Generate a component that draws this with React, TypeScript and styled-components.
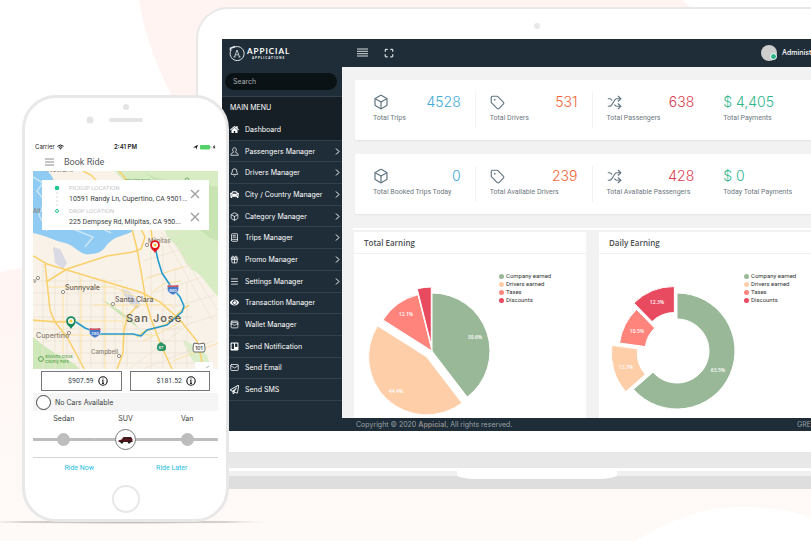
import React, { useState } from 'react'
import styled, { createGlobalStyle } from 'styled-components';
import { Bell, BookText, Box, Gift, Mail, Maximize, Menu, Shuffle, Tag, WalletCards } from 'lucide-react';
import { FaCar, FaEye, FaHome, FaRegPaperPlane, FaTrello } from 'react-icons/fa';

const colors = {
  navy: '#1f2d38',
  navyDark: '#161f26',
  rule: '#33414c',
  bezel: '#e8e8e8',
  page: '#f2f2f2',
  blue: '#41a9d8',
  orange: '#ee6539',
  red: '#dc3b50',
  green: '#2fb58c',
  sage: '#99b898',
  peach: '#fecea8',
  coral: '#ff847c',
  rose: '#e84a5f',
}

const GlobalStyle = createGlobalStyle`
  * {
    box-sizing: border-box;
  }
  body {
    margin: 0;
    background: #fff;
    font-family: Roboto, sans-serif;
  }
  ul, h1, h2, p, fieldset {
    margin: 0;
    padding: 0;
    border: 0;
    list-style: none;
  }
  button, input {
    font-family: inherit;
    margin: 0;
    padding: 0;
    border: 0;
    background: none;
    min-width: 0;
  }
`

const Stage = styled.div`
  position: relative;
  min-height: 100vh;
  overflow: hidden;
`

const Backdrop = styled.svg`
  position: absolute;
  top: 0;
  left: 0;
`

/** Laptop */
const Laptop = styled.div`
  position: relative;
  margin: 7px -66px 0 196px;
`

const Lid = styled.div`
  border: 2px solid ${colors.bezel};
  border-bottom: 0;
  border-radius: 32px 32px 0 0;
  background: #fff;
  padding: 0 24px 21px;
`

const LidTop = styled.div`
  height: 30px;
  display: flex;
  justify-content: center;
  padding-top: 14px;
`

const Lens = styled.div`
  width: 6px;
  height: 6px;
  border-radius: 50%;
  background: ${colors.bezel};
`

const Screen = styled.div`
  display: grid;
  grid-template-columns: 120px 1fr;
  background: ${colors.navy};
`

const Hinge = styled.div`
  height: 16px;
  background: ${colors.bezel};
`

const Base = styled.div`
  position: relative;
  height: 21px;
  background: #dedede;
  border-top: 3px solid #fff;
  box-shadow: inset 0 5px 0 #f0f0f0;
`

const Notch = styled.div`
  position: absolute;
  top: 0;
  left: 50%;
  width: 160px;
  height: 8px;
  margin-left: -80px;
  background: #fff;
  border-radius: 0 0 20px 20px / 0 0 4px 4px;
`

/** Sidebar */
const Sidebar = styled.aside`
  font-family: Inter, sans-serif;
  font-size: 7px;
  color: #fff;
`

const Brand = styled.div`
  height: 29px;
  display: flex;
  align-items: center;
  gap: 2px;
  padding-left: 7px;
`

const BrandName = styled.p`
  font: 700 8px/9px Lato, sans-serif;
  letter-spacing: 1px;
`

const BrandSub = styled.p`
  font: 700 3px/4px Lato, sans-serif;
  letter-spacing: 1px;
  text-align: center;
`

const SearchRow = styled.div`
  padding: 5px 5px 6px 3px;
  border-bottom: 1px solid ${colors.rule};
`

const SearchInput = styled.input`
  display: block;
  width: 100%;
  height: 17px;
  border-radius: 9px;
  padding: 0 8px;
  background: #0a1216;
  font-size: 7px;
  color: #fff;
  &::placeholder {
    color: #a9adaf;
    opacity: 1;
  }
`

const MenuTitle = styled.h2`
  font-size: 7px;
  font-weight: 400;
  line-height: 22px;
  padding-left: 8px;
  background: ${colors.navyDark};
`

const MenuList = styled.ul`
  height: 282px;
  display: grid;
  grid-template-rows: repeat(13, 1fr);
`

const MenuItem = styled.li<
  {active: boolean}>`
  background: ${({active}) => active ? colors.navyDark : 'transparent'};
  border-bottom: 1px solid ${colors.rule};
`

const MenuLink = styled.a`
  height: 100%;
  display: grid;
  grid-template-columns: 9px 1fr 9px;
  align-items: center;
  column-gap: 6px;
  padding-left: 8px;
  color: #fff;
  text-decoration: none;
  white-space: nowrap;
  svg {
    width: 9px;
    height: 9px;
  }
`

/** Right side of the admin panel */
const Panel = styled.div`
  min-width: 0;
  display: flex;
  flex-direction: column;
`

const TopBar = styled.header`
  height: 28px;
  display: flex;
  align-items: center;
  gap: 16px;
  padding: 0 20px 1px 15px;
`

const IconButton = styled.button`
  display: flex;
  color: #d5dadd;
  cursor: pointer;
`

const User = styled.div`
  margin-left: auto;
  width: 70px;
  display: flex;
  align-items: center;
  gap: 5px;
  font: 500 7px/9px Inter, sans-serif;
  color: #fff;
`

const Avatar = styled.div`
  position: relative;
  flex: none;
  width: 16px;
  height: 16px;
  border-radius: 50%;
  background: #cdcdcd;
  &::after {
    content: '';
    position: absolute;
    right: 0;
    bottom: 1px;
    width: 5px;
    height: 5px;
    border-radius: 50%;
    border: 1px solid #fff;
    background: ${colors.green};
  }
`

const Content = styled.main`
  flex: 1;
  background: ${colors.page};
  padding: 13px 20px 0 12px;
`

const StatCard = styled.section`
  display: grid;
  grid-template-columns: repeat(4, 1fr);
  margin: 0 0 14px 1px;
  padding: 12px 6px 12px 3px;
  background: #fff;
  box-shadow: 0 1px 1px #e6e6e6;
`

const Stat = styled.div`
  height: 36px;
  padding: 0 14px;
  border-left: 1px solid #f3f3f3;
  &:first-child, &:last-child {
    border-left-color: #fff;
  }
`

const StatTop = styled.div`
  display: flex;
  align-items: center;
  justify-content: space-between;
  height: 20px;
  color: #607580;
`

const StatValue = styled.span<
  {color: string}>`
  font: 300 14px/20px Inter, sans-serif;
  color: ${({color}) => color};
`

const StatLabel = styled.p`
  font-size: 7px;
  line-height: 12px;
  color: #6d7880;
  white-space: nowrap;
`

const ChartRow = styled.div`
  display: grid;
  grid-template-columns: 1fr 1fr;
  gap: 13px;
  border-top: 2px solid #fff;
  padding-top: 2px;
  margin-left: -1px;
  padding-left: 1px;
`

const ChartCard = styled.section`
  background: #fff;
`

const ChartTitle = styled.h2`
  font: 600 8px/21px 'Open Sans', sans-serif;
  color: #4c4f52;
  padding-left: 10px;
  border-bottom: 1px solid #f0f0f0;
`

const ChartBody = styled.div`
  display: grid;
  grid-template-columns: 145px 1fr;
  height: 164px;
`

const Legend = styled.ul`
  padding-top: 18px;
`

const LegendItem = styled.li<
  {color: string}>`
  display: flex;
  align-items: center;
  gap: 2px;
  font-size: 6px;
  line-height: 8px;
  color: #333;
  &::before {
    content: '';
    width: 5px;
    height: 5px;
    border-radius: 50%;
    background: ${({color}) => color};
  }
`

const SliceLabel = styled.text`
  font: 600 5px 'Open Sans', sans-serif;
  fill: #fff;
  text-anchor: middle;
`

const Footer = styled.footer`
  display: flex;
  justify-content: space-between;
  padding: 2px 40px 1px 14px;
  background: ${colors.navy};
  font: 7px/10px Inter, sans-serif;
  color: #98a1a7;
  b {
    color: #858585;
  }
`

/** Phone */
const Phone = styled.div`
  position: absolute;
  top: 95px;
  left: 22px;
  width: 207px;
  border: 3px solid ${colors.bezel};
  border-radius: 34px;
  background: #fff;
  padding: 0 8px;
  font-size: 7px;
  color: #3b3f42;
`

const Earpiece = styled.svg`
  display: block;
  margin: 0 auto;
`

const StatusBar = styled.div`
  display: grid;
  grid-template-columns: 1fr auto 1fr;
  align-items: center;
  height: 12px;
  padding: 0 2px;
  font: 400 6px/8px Inter, sans-serif;
  color: #222;
  b {
    font-weight: 600;
  }
`

const StatusSide = styled.span<
  {end?: boolean}>`
  display: flex;
  align-items: center;
  gap: 2px;
  justify-content: ${({end}) => end ? 'flex-end' : 'flex-start'};
`

const NavBar = styled.div`
  height: 18px;
  display: flex;
  align-items: center;
  gap: 10px;
  padding: 0 12px;
  h1 {
    font-size: 9px;
    font-weight: 400;
    line-height: 12px;
    color: #55585b;
  }
`

const MapArea = styled.div`
  position: relative;
  > svg {
    display: block;
    width: 100%;
  }
`

const AddressCard = styled.div`
  position: absolute;
  top: 9px;
  left: 9px;
  right: 9px;
  display: grid;
  grid-template-columns: 11px 1fr;
  gap: 7px;
  padding: 2px 9px 2px 9px;
  background: #fff;
`

const Stop = styled.div`
  display: grid;
  grid-template-columns: 1fr 10px;
  align-items: center;
  column-gap: 3px;
  height: 23px;
`

const StopLabel = styled.label`
  display: block;
  font-size: 6px;
  line-height: 10px;
  color: #c6c8ca;
`

const StopInput = styled.input`
  display: block;
  width: 100%;
  height: 12px;
  font-size: 7px;
  color: #3b3f42;
`

const Fares = styled.div`
  display: grid;
  grid-template-columns: 1fr 1fr;
  gap: 8px;
  padding: 2px 8px;
`

const Fare = styled.button`
  height: 20px;
  display: flex;
  align-items: center;
  justify-content: flex-end;
  gap: 4px;
  padding-right: 13px;
  border: 1px solid #777;
  font-size: 7px;
  color: #34424c;
`

const Notice = styled.label`
  height: 18px;
  display: flex;
  align-items: center;
  gap: 4px;
  padding-left: 3px;
  background: #f5f5f5;
  font-family: Inter, sans-serif;
  input {
    appearance: none;
    width: 15px;
    height: 15px;
    border: 1px solid #444;
    border-radius: 50%;
    background: #fff;
  }
`

const RideTypes = styled.fieldset`
  display: grid;
  grid-template-columns: repeat(3, 1fr);
  height: 47px;
  padding-top: 3px;
  border-bottom: 1px solid #d4d4d4;
`

const RideType = styled.label`
  display: flex;
  flex-direction: column;
  align-items: center;
  font-family: Inter, sans-serif;
  line-height: 10px;
`

const RideTrack = styled.span`
  position: relative;
  width: 100%;
  height: 31px;
  display: grid;
  place-items: center;
  background: linear-gradient(#bdbdbd, #bdbdbd) center / 100% 3px no-repeat;
  input {
    appearance: none;
    grid-area: 1 / 1;
    width: 13px;
    height: 13px;
    border-radius: 50%;
    background: #bdbdbd;
  }
  input:checked {
    width: 21px;
    height: 21px;
    border: 1px solid #777;
    background: #fff;
  }
  svg {
    grid-area: 1 / 1;
    z-index: 1;
  }
`

const RideActions = styled.div`
  display: grid;
  grid-template-columns: 1fr 1fr;
  height: 20px;
  button {
    font-size: 7px;
    color: #1fbddb;
    cursor: pointer;
  }
`

const HomeButton = styled.button`
  display: block;
  width: 28px;
  height: 28px;
  margin: 7px auto 6px;
  border: 2px solid ${colors.bezel};
  border-radius: 50%;
`

type Slice = {
  value: number;
  color: string;
  offset: number;
  label?: string;
  at?: [number, number];
}

const legend = [
  { name: 'Company earned', color: colors.sage },
  { name: 'Drivers earned', color: colors.peach },
  { name: 'Taxes', color: colors.coral },
  { name: 'Discounts', color: colors.rose },
]

const totalSlices: Slice[] = [
  { value: 39.6, color: colors.sage, offset: 0, label: '39.6%', at: [121, 85] },
  { value: 44.4, color: colors.peach, offset: 8, label: '44.4%', at: [42, 139] },
  { value: 12.1, color: colors.coral, offset: 0, label: '12.1%', at: [52, 62] },
  { value: 3.9, color: colors.rose, offset: 6 },
]

const dailySlices: Slice[] = [
  { value: 63.5, color: colors.sage, offset: 0, label: '63.5%', at: [119, 118] },
  { value: 13.7, color: colors.peach, offset: 8, label: '13.7%', at: [27, 115] },
  { value: 10.5, color: colors.coral, offset: 0, label: '10.5%', at: [38, 79] },
  { value: 12.3, color: colors.rose, offset: 7, label: '12.3%', at: [58, 50] },
]

const menu = [
  { title: 'Dashboard', icon: <FaHome /> },
  { title: 'Passengers Manager', icon: <PersonIcon />, sub: true },
  { title: 'Drivers Manager', icon: <Bell />, sub: true },
  { title: 'City / Country Manager', icon: <FaCar />, sub: true },
  { title: 'Category Manager', icon: <Box />, sub: true },
  { title: 'Trips Manager', icon: <BookText />, sub: true },
  { title: 'Promo Manager', icon: <Gift />, sub: true },
  { title: 'Settings Manager', icon: <Menu />, sub: true },
  { title: 'Transaction Manager', icon: <FaEye /> },
  { title: 'Wallet Manager', icon: <WalletCards /> },
  { title: 'Send Notification', icon: <FaTrello /> },
  { title: 'Send Email', icon: <Mail /> },
  { title: 'Send SMS', icon: <FaRegPaperPlane /> },
]

const box = <Box size={16} strokeWidth={1.8} />
const tag = <Tag size={15} strokeWidth={1.8} />
const shuffle = <Shuffle size={15} strokeWidth={1.8} />

const stats = [
  [
    { label: 'Total Trips', value: '4528', color: colors.blue, icon: box },
    { label: 'Total Drivers', value: '531', color: colors.orange, icon: tag },
    { label: 'Total Passengers', value: '638', color: colors.red, icon: shuffle },
    { label: 'Total Payments', value: '$ 4,405', color: colors.green },
  ],
  [
    { label: 'Total Booked Trips Today', value: '0', color: colors.blue, icon: box },
    { label: 'Total Available Drivers', value: '239', color: colors.orange, icon: tag },
    { label: 'Total Available Passengers', value: '428', color: colors.red, icon: shuffle },
    { label: 'Today Total Payments', value: '$ 0', color: colors.green },
  ],
]

const stops = [
  { id: 'pickup', label: 'PICKUP LOCATION', value: '10591 Randy Ln, Cupertino, CA 9501...' },
  { id: 'drop', label: 'DROP LOCATION', value: '225 Dempsey Rd, Milpitas, CA 950...' },
]

/** Icons */
function PersonIcon () {
  return (
    <svg viewBox="0 0 24 24" fill="none" stroke="currentColor" strokeWidth="2">
      <path d="M12 2c-3.400 0-5 2.300-5 5.500 0 2.700 1.200 4.500 2.600 5.500-.3 2-1.600 2.500-4 3.200C3.300 16.900 2 18.300 2 22h20c0-3.700-1.300-5.100-3.600-5.800-2.400-.7-3.700-1.200-4-3.200 1.400-1 2.600-2.800 2.600-5.500C17 4.300 15.400 2 12 2z" />
    </svg>
  )
}

function ChevronIcon () {
  return (
    <svg viewBox="0 0 9 9" fill="none" stroke="currentColor" strokeWidth="1">
      <path d="M3 1.500 6 4.500 3 7.500" />
    </svg>
  )
}

function CrossIcon () {
  return (
    <svg width="10" height="10" viewBox="0 0 10 10" stroke="#a0a0a0" strokeWidth="1.400">
      <path d="M1 1 9 9M9 1 1 9" />
    </svg>
  )
}

function InfoIcon () {
  return (
    <svg width="10" height="10" viewBox="0 0 10 10" fill="none" stroke="#111">
      <circle cx="5" cy="5" r="4.200" strokeWidth="1.100" />
      <path d="M5 4.300V7.500M5 2.400V3.500M4.200 4.500H5M4 7.400H6" strokeWidth="1" />
    </svg>
  )
}

function BrandIcon () {
  return (
    <svg width="16" height="17" viewBox="0 0 16 17" fill="none" stroke="#e3e8ea">
      <path d="M5 2.300A7 7 0 1 1 2.100 5" strokeWidth="1" />
      <path d="M1 3.500 6 1.500M1.500 5.500V2.500" strokeWidth="1.600" />
      <path d="M5.500 12 8 5 10.500 12M6.500 9.800H9.500M4.500 12H6.500M9.500 12H11.500" strokeWidth=".8" />
    </svg>
  )
}

function polar (cx: number, cy: number, r: number, deg: number) {
  const rad = deg * Math.PI / 180;
  return [cx + r * Math.sin(rad), cy - r * Math.cos(rad)];
}

function slicePath (start: number, end: number, inner: number, offset: number) {
  const outer = 58;
  const [cx, cy] = polar(78, 97, offset, (start + end) / 2);
  const [x1, y1] = polar(cx, cy, outer, start);
  const [x2, y2] = polar(cx, cy, outer, end);
  const [x3, y3] = polar(cx, cy, inner, end);
  const [x4, y4] = polar(cx, cy, inner, start);
  const large = end - start > 180 ? 1 : 0;
  return `M${x1} ${y1}A${outer} ${outer} 0 ${large} 1 ${x2} ${y2}L${x3} ${y3}A${inner} ${inner} 0 ${large} 0 ${x4} ${y4}Z`;
}

const Pie = ({title, slices, inner = 0}: {title: string; slices: Slice[]; inner?: number}) => {
  let angle = 0;

  /** Renders */
  const _renderSlice = (slice: Slice, index: number) => {
    const start = angle;
    angle += slice.value * 3.6;
    return (
      <path
        key={`slice_${index}`}
        d={slicePath(start, angle, inner, slice.offset)}
        fill={slice.color}
        stroke="#fff"
        strokeWidth="1"
      />
    )
  }

  return (
    <ChartCard>
      <ChartTitle>{title}</ChartTitle>
      <ChartBody>
        <svg width="145" height="164" viewBox="0 0 145 164">
          {slices.map(_renderSlice)}
          {slices.filter(s => s.at).map(s => (
            <SliceLabel key={s.label} x={s.at![0]} y={s.at![1]}>{s.label}</SliceLabel>
          ))}
        </svg>
        <Legend>
          {legend.map(l => <LegendItem key={l.name} color={l.color}>{l.name}</LegendItem>)}
        </Legend>
      </ChartBody>
    </ChartCard>
  )
}

const CityMap = () => (
  <svg viewBox="0 0 185 198" fontFamily="Inter, sans-serif" fontWeight="500" fill="none">
    <rect width="185" height="198" fill="#f9f2e8" />
    {/* parks and hills */}
    <path d="M82 0H185V125C176 118 172 106 160 99C148 92 150 78 138 70C128 62 130 30 112 22C98 16 90 10 82 0z" fill="#d8ecc4" />
    <path d="M110 0C125 12 150 8 185 16V70C160 62 150 30 110 0z" fill="#c8e4b3" />
    <path d="M0 166C8 172 14 178 24 183C34 188 42 192 46 198H0z" fill="#cfe8b9" />
    <path d="M150 168C158 174 168 176 174 184L178 198H164C160 188 152 180 150 168z" fill="#dceec9" />
    <path d="M68 128C80 134 90 142 100 150L112 166 104 156C92 148 80 138 68 128z" fill="#c8e4b3" />
    {/* bay */}
    <path d="M0 0H14C22 6 20 14 30 20C48 26 62 40 82 50L102 58C98 64 84 64 78 70C70 76 72 82 58 83C48 86 42 74 32 72C22 70 12 64 0 62z" fill="#8fcbf3" />
    <path d="M0 6 10 12 4 20 12 30 6 44 14 60M40 58 60 66 52 76M70 58 78 62" stroke="#c9e6f5" strokeWidth="1.500" />
    <path d="M20 76 27 78 34 92 30 98 22 92z" fill="#d9dae3" />
    <path d="M88 118 96 120 108 134 104 138 96 132z" fill="#d4d6e0" />
    {/* street grid */}
    <g stroke="#eee3d5" strokeWidth=".8">
      <path d="M10 92V198M22 102V198M34 100V198M46 104V198M58 108V198M70 106V198M82 108V198M94 114V198M118 70V198M130 76V198M142 96V198M154 110V198" />
      <path d="M0 110H90M0 122H106M0 134H150M0 146H160M0 158H150M10 170H150M24 182H160M40 192H170" />
      <path d="M108 74 150 60M110 90 156 76M114 106 160 94M120 122 170 106M128 140 182 124M134 160 184 144M96 198 160 150M110 198 180 170M128 60 180 150M140 70 185 140" />
    </g>
    <g stroke="#fbe3a6" strokeWidth="1">
      <path d="M14 116H80L104 126M30 120V182M48 106V190M72 108V198M90 116V176M0 150H90M20 164H120M60 134H140M112 108 150 96M118 122 132 112 148 110M140 190 185 172M110 170 150 150" />
    </g>
    {/* freeways */}
    <g stroke="#fad06a" strokeWidth="1.500">
      <path d="M50 0 58 4 66 12M86 0 98 14 112 28M97 50 104 78 109 106 113 130 118 148 128 174 139 198" />
      <path d="M0 85 14 93 34 99 77 112 107 121 127 131 147 149 164 170 168 186 170 198" />
      <path d="M12 93 14 111 17 139 22 151 34 166 48 192 51 198M13 111 34 98 74 85 100 81 108 78 112 66 106 54" />
      <path d="M0 149 22 151 38 151M117 48 120 76M105 134 94 146 91 160 90 182 84 198M104 166 112 160 132 154 148 140 156 134" />
    </g>
    {/* route */}
    <path d="M43 151 52 157 67 163 100 163 108 165 114 159 134 154 149 141 151 135 147 126 137 114 129 102 125 89 122 76" stroke="#249bce" strokeWidth="1.600" strokeLinejoin="round" />
    <g fill="#8a8177">
      <text x="14" y="1" fontSize="7">Newark</text>
      <text x="0" y="42" fontSize="6">Alt</text>
      <text x="0" y="112" fontSize="6">v</text>
      <text x="32" y="119" fontSize="7" fill="#6b665f">Sunnyvale</text>
      <text x="82" y="131" fontSize="7" fill="#6b665f">Santa Clara</text>
      <text x="3" y="167" fontSize="7">Cupertino</text>
      <text x="58" y="183" fontSize="6">Campbell</text>
      <text x="115" y="72" fontSize="6">Milpitas</text>
      <text x="93" y="151" fontSize="11" letterSpacing="1" fill="#5d5852">San Jose</text>
    </g>
    <g fill="#59a04d" fontSize="4">
      <text x="92" y="11">Mission Peak</text>
      <text x="12" y="187">Stevens Creek</text>
      <text x="12" y="192">County Park</text>
    </g>
    <circle cx="8" cy="188" r="2.400" stroke="#59a04d" strokeWidth="1" />
    <circle cx="154" cy="9" r="2" stroke="#59a04d" strokeWidth=".8" />
    <g fill="#fff" stroke="#7b746b" strokeWidth=".8">
      <circle cx="30" cy="121" r="1.600" />
      <circle cx="80" cy="133" r="1.600" />
      <circle cx="36" cy="162" r="1.600" />
      <circle cx="86" cy="185" r="1.600" />
      <circle cx="114" cy="74" r="1.600" />
      <circle cx="5" cy="107" r="1.600" />
    </g>
    {/* shields */}
    {[[140, 118, '680'], [62, 161, '280']].map(([x, y, n]) => (
      <g key={n} transform={`translate(${x} ${y})`}>
        <path d="M-5-4Q0-3 5-4Q8 3 0 6Q-8 3-5-4z" fill="#4678c8" stroke="#e8edf8" strokeWidth=".6" />
        <path d="M-5-4Q0-3 5-4L5.700-2H-5.700z" fill="#d9545c" />
        <text y="2.500" fontSize="4" fill="#fff" textAnchor="middle">{n}</text>
      </g>
    ))}
    <path d="M125 173 128 171 131 173 133 178H124z" fill="#2d9467" />
    <rect x="124" y="173" width="9" height="7" rx="3" fill="#2d9467" />
    <text x="128" y="178" fontSize="4" fill="#fff" textAnchor="middle">87</text>
    <path d="M161 172Q166 174 171 172Q173 179 171 181H161Q159 179 161 172z" fill="#fff" stroke="#444" strokeWidth=".8" />
    <text x="166" y="179" fontSize="5" fill="#222" textAnchor="middle">101</text>
    {/* pins */}
    {[[122, 75, '#e0151b'], [38, 151, '#12885f']].map(([x, y, c]) => (
      <g key={c} transform={`translate(${x} ${y})`}>
        <path d="M0 7C-1.500 4-4.800 3-4.800-1A4.800 4.800 0 0 1 4.800-1C4.800 3 1.500 4 0 7z" fill={c as string} />
        <circle cy="-1" r="3" fill="#fff" />
        <circle cy="-1" r="1.600" fill="#f3c93c" />
      </g>
    ))}
    <path d="M162 191H180V198H162z" fill="#fff" />
    <path d="M173 197 176 195" stroke="#999" strokeWidth=".8" />
  </svg>
)

const CarIcon = () => (
  <svg width="15" height="8" viewBox="0 0 15 8">
    <path d="M.5 4.500 3.500 3.500 5.500 1H13L14.500 3V6H.8z" fill="#6d1a1f" />
    <path d="M4.600 3.300 6 1.600H8.500L8 3.300zM9.200 1.600H12.500L13.300 3H8.900z" fill="#1d1f24" />
    <path d="M.8 5.200H14" stroke="#2a0d10" strokeWidth=".8" />
    <circle cx="3.800" cy="6" r="1.500" fill="#1a1a1a" />
    <circle cx="11.200" cy="6" r="1.500" fill="#1a1a1a" />
  </svg>
)

const Dashboard = () => {
  /** State */
  const [current, setCurrent] = useState('Dashboard');

  return (
    <Screen>
      <Sidebar>
        <Brand>
          <BrandIcon />
          <div>
            <BrandName>APPICIAL</BrandName>
            <BrandSub>APPLICATIONS</BrandSub>
          </div>
        </Brand>
        <SearchRow>
          <SearchInput type="search" placeholder="Search" aria-label="Search" />
        </SearchRow>
        <MenuTitle>MAIN MENU</MenuTitle>
        <MenuList>
          {menu.map(item => (
            <MenuItem key={item.title} active={current === item.title}>
              <MenuLink href="#" onClick={() => setCurrent(item.title)}>
                {item.icon}
                <span>{item.title}</span>
                {item.sub && <ChevronIcon />}
              </MenuLink>
            </MenuItem>
          ))}
        </MenuList>
      </Sidebar>
      <Panel>
        <TopBar>
          <IconButton aria-label="Toggle menu">
            <svg width="11" height="9" viewBox="0 0 11 9" stroke="currentColor">
              <path d="M0 1H11M0 3.300H11M0 5.700H11M0 8H11" />
            </svg>
          </IconButton>
          <IconButton aria-label="Full screen">
            <Maximize size={10} strokeWidth={3} />
          </IconButton>
          <User>
            <Avatar />
            Administ
          </User>
        </TopBar>
        <Content>
          {stats.map((row, index) => (
            <StatCard key={`row_${index}`}>
              {row.map(stat => (
                <Stat key={stat.label}>
                  <StatTop>
                    {stat.icon}
                    <StatValue color={stat.color}>{stat.value}</StatValue>
                  </StatTop>
                  <StatLabel>{stat.label}</StatLabel>
                </Stat>
              ))}
            </StatCard>
          ))}
          <ChartRow>
            <Pie title="Total Earning" slices={totalSlices} />
            <Pie title="Daily Earning" slices={dailySlices} inner={32} />
          </ChartRow>
        </Content>
        <Footer>
          <span>Copyright © 2020 <b>Appicial</b>, All rights reserved.</span>
          <span>GRE</span>
        </Footer>
      </Panel>
    </Screen>
  )
}

const BookRide = () => {
  /** State */
  const [type, setType] = useState('SUV');

  return (
    <Phone>
      <Earpiece width="80" height="43" viewBox="0 0 80 43" fill="#e4e4e4">
        <circle cx="40" cy="9" r="3" />
        <circle cx="4" cy="22" r="3.500" />
        <rect x="23" y="20" width="34" height="4" rx="2" />
      </Earpiece>
      <StatusBar>
        <StatusSide>
          Carrier
          <svg width="7" height="6" viewBox="0 0 14 11" fill="none" stroke="#111" strokeWidth="2">
            <path d="M1 4Q7-1 13 4M3.500 6.500Q7 3.500 10.500 6.500" />
            <path d="M5.500 8.500Q7 7.300 8.500 8.500L7 10.200z" fill="#111" strokeWidth="1" />
          </svg>
        </StatusSide>
        <b>2:41 PM</b>
        <StatusSide end>
          <svg width="23" height="6" viewBox="0 0 23 6">
            <path d="M0 3.500 5 .8 3.200 5.600 2.800 3.600z" fill="#111" />
            <rect x="7" y="1" width="10" height="4.500" rx="1" fill="#52d267" />
            <rect x="17.500" y="2.300" width="1" height="2" fill="#aaa" />
            <path d="M21.500.5 19.800 3.400H21L20.600 5.500 22.500 2.700H21.300z" fill="#111" />
          </svg>
        </StatusSide>
      </StatusBar>
      <NavBar>
        <IconButton aria-label="Open menu">
          <svg width="9" height="8" viewBox="0 0 9 8" stroke="#8c8c8c">
            <path d="M0 1H9M0 4H9M0 7H9" />
          </svg>
        </IconButton>
        <h1>Book Ride</h1>
      </NavBar>
      <MapArea>
        <CityMap />
        <AddressCard>
          <svg width="11" height="46" viewBox="0 0 11 46" fill="none">
            <path d="M6 10V25" stroke="#d8d8d8" strokeDasharray="2 2" />
            <circle cx="6" cy="6" r="2.300" fill="#22c58b" />
            <circle cx="6" cy="29" r="1.500" stroke="#22c58b" />
          </svg>
          <div>
            {stops.map(stop => (
              <Stop key={stop.id}>
                <div>
                  <StopLabel htmlFor={stop.id}>{stop.label}</StopLabel>
                  <StopInput id={stop.id} defaultValue={stop.value} />
                </div>
                <IconButton aria-label={`Clear ${stop.id}`}><CrossIcon /></IconButton>
              </Stop>
            ))}
          </div>
        </AddressCard>
      </MapArea>
      <Fares>
        <Fare>$907.59 <InfoIcon /></Fare>
        <Fare>$181.52 <InfoIcon /></Fare>
      </Fares>
      <Notice>
        <input type="radio" name="availability" />
        No Cars Available
      </Notice>
      <RideTypes>
        {['Sedan', 'SUV', 'Van'].map(name => (
          <RideType key={name}>
            {name}
            <RideTrack>
              <input type="radio" name="ride" checked={type === name} onChange={() => setType(name)} />
              {type === name && <CarIcon />}
            </RideTrack>
          </RideType>
        ))}
      </RideTypes>
      <RideActions>
        <button>Ride Now</button>
        <button>Ride Later</button>
      </RideActions>
      <HomeButton aria-label="Home" />
    </Phone>
  )
}

export const App = () => (
  <>
    <GlobalStyle />
    <Stage>
      <Backdrop width="811" height="541" viewBox="0 0 811 541">
        <defs>
          <linearGradient id="ground" x1="0" x2="0" y1="0" y2="1">
            <stop offset="0" stopColor="#fff5f2" />
            <stop offset="1" stopColor="#fefaf8" />
          </linearGradient>
          <radialGradient id="shade">
            <stop offset="0" stopColor="#bdb6b3" />
            <stop offset=".7" stopColor="#d8d2cf" />
            <stop offset="1" stopColor="#fef8f6" stopOpacity="0" />
          </radialGradient>
        </defs>
        <path d="M139 0C145 36 158 74 180 110L260 160H811V20Q760 0 683 0z" fill="#fff4f2" />
        <path d="M683 0Q690 8 700 14H811V0z" fill="#fff" />
        <path d="M0 272Q22 266 60 268L240 480H811V541H0z" fill="url(#ground)" />
        <path d="M636 541Q690 506 745 507Q790 508 811 518V541z" fill="#fff" />
        <ellipse cx="125" cy="522" rx="155" ry="2" fill="url(#shade)" />
      </Backdrop>
      <Laptop>
        <Lid>
          <LidTop><Lens /></LidTop>
          <Dashboard />
        </Lid>
        <Hinge />
        <Base><Notch /></Base>
      </Laptop>
      <BookRide />
    </Stage>
  </>
)

export default App
